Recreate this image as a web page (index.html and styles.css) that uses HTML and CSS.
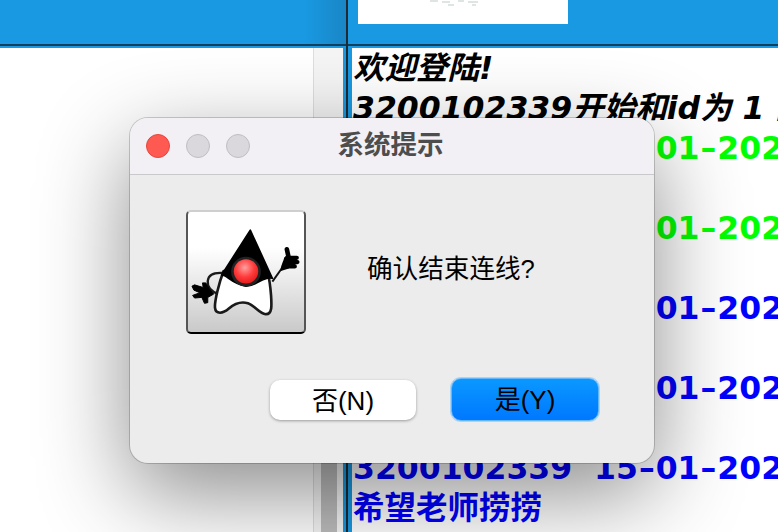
FILE: index.html
```html
<!DOCTYPE html>
<html lang="zh">
<head>
    <meta charset="UTF-8">
    <meta name="viewport" content="width=device-width, initial-scale=1.0">
    <title>系统提示</title>
    <link rel="stylesheet" href="styles.css">
</head>
<body>
    <div class="app">
        <div class="pane pane-left">
            <div class="pane-head"></div>
            <div class="pane-body">
                <div class="user-list"></div>
                <div class="scrollbar">
                    <div class="scroll-thumb"></div>
                </div>
            </div>
        </div>
        <div class="divider"></div>
        <div class="pane pane-right">
            <div class="pane-head">
                <div class="logo">
                    <svg class="logo-bits" viewBox="0 0 56 7">
                        <path d="M2 1 H10 M14 2 H22 M20 5 H26 M30 1 H36 M40 2 H50 M44 5 H48" stroke="#d5dbdd" stroke-width="1.5" fill="none"/>
                    </svg>
                </div>
            </div>
            <div class="pane-body">
                <div class="chat">
                    <p class="line line-system">欢迎登陆!</p>
                    <p class="line line-system">3200102339开始和id为 1 的</p>
                    <p class="line msg-green">3200102339  15<span class="dash">–</span>01<span class="dash">–</span>2022</p>
                    <p class="line"></p>
                    <p class="line msg-green">3200102339  15<span class="dash">–</span>01<span class="dash">–</span>2022</p>
                    <p class="line"></p>
                    <p class="line msg-blue">3200102339  15<span class="dash">–</span>01<span class="dash">–</span>2022</p>
                    <p class="line"></p>
                    <p class="line msg-blue">3200102339  15<span class="dash">–</span>01<span class="dash">–</span>2022</p>
                    <p class="line"></p>
                    <p class="line msg-blue">3200102339  15<span class="dash">–</span>01<span class="dash">–</span>2022</p>
                    <p class="line msg-blue">希望老师捞捞</p>
                </div>
            </div>
        </div>
    </div>

    <div class="dialog">
        <div class="title-bar">
            <div class="lights">
                <span class="light light-close"></span>
                <span class="light"></span>
                <span class="light"></span>
            </div>
            <div class="title">系统提示</div>
        </div>
        <div class="dialog-body">
            <div class="message-row">
                <div class="duke-box">
                    <svg class="duke" viewBox="52 47 352 364">
                        <defs>
                            <radialGradient id="nose" cx="0.45" cy="0.35" r="0.7">
                                <stop offset="0" stop-color="#ffa0a0"/>
                                <stop offset="0.55" stop-color="#ff3b3b"/>
                                <stop offset="1" stop-color="#e01818"/>
                            </radialGradient>
                        </defs>
                        <!-- brazo izquierdo -->
                        <path d="M158 232 C130 230 114 238 112 256 C110 276 126 290 146 297" fill="none" stroke="#1a1a1a" stroke-width="7"/>
                        <path d="M64 272 L72 268 L98 276 L96 262 L106 262 L116 280 L130 296 L112 306 L112 322 L102 324 L94 306 L72 308 L66 300 L88 292 L70 284 Z" fill="#000" stroke="#000" stroke-width="3" stroke-linejoin="round"/>
                        <!-- cuerpo -->
                        <path d="M160 226 C146 262 132 318 134 338 C136 358 158 356 176 340 C192 326 214 318 234 324 C256 332 268 354 288 357 C308 358 306 330 304 300 C302 274 300 254 294 232 Z" fill="#fff" stroke="#1a1a1a" stroke-width="8" stroke-linejoin="round"/>
                        <!-- sombrero -->
                        <path d="M241 102 L154 238 C172 238 180 262 228 272 C262 272 280 240 308 248 Z" fill="#000" stroke="#000" stroke-width="5" stroke-linejoin="round"/>
                        <circle cx="228" cy="228" r="45" fill="#222"/>
                        <circle cx="228" cy="227" r="37" fill="url(#nose)"/>
                        <!-- brazo derecho -->
                        <path d="M308 258 L338 216" stroke="#111" stroke-width="6" fill="none"/>
                        <path d="M352 160 L358 188" stroke="#000" stroke-width="14" stroke-linecap="round" fill="none"/>
                        <path d="M352 186 H382 M352 199 H384 M350 212 H376" stroke="#000" stroke-width="13" stroke-linecap="round" fill="none"/>
                        <path d="M344 184 L360 184 L358 218 L334 226 C330 214 342 198 344 184 Z" fill="#000"/>
                    </svg>
                </div>
                <div class="message">确认结束连线?</div>
            </div>
            <div class="buttons">
                <button class="btn">否(N)</button>
                <button class="btn btn-primary">是(Y)</button>
            </div>
        </div>
    </div>
</body>
</html>
```
FILE: styles.css
```css
* {
    margin: 0;
    padding: 0;
    box-sizing: border-box;
}

html, body {
    height: 100%;
    overflow: hidden;
}

body {
    background: #1899e2;
    font-family: "Liberation Sans", "Noto Sans CJK SC", sans-serif;
}

.app {
    display: flex;
    height: 532px;
    overflow: hidden;
}

.pane {
    display: flex;
    flex-direction: column;
}

.pane-left {
    width: 346px;
}

.pane-right {
    flex: 1;
    min-width: 0;
}

.pane-head {
    height: 46px;
    border-bottom: 2px solid #123f5c;
}

.pane-left .pane-head {
    background: linear-gradient(90deg, #1899e2 88%, #1a86c6);
}

.pane-body {
    flex: 1;
    min-height: 0;
    display: flex;
    margin-top: 2px;
}

.pane-left .pane-body {
    padding-right: 3px;
}

.pane-right .pane-body {
    padding-left: 4px;
}

.user-list {
    flex: 1;
    background: #fff;
}

.scrollbar {
    width: 30px;
    padding: 0 6px 0 7px;
    display: flex;
    flex-direction: column;
    justify-content: flex-end;
    background: #f5f5f5;
    border-left: 1px solid #dedede;
}

.scroll-thumb {
    height: 200px;
    background: #bdbdbd;
}

.divider {
    width: 2px;
    background: #1f2a33;
}

.logo {
    width: 210px;
    height: 24px;
    margin-left: 10px;
    padding-left: 70px;
    background: #fff;
}

.logo-bits {
    display: block;
    width: 56px;
    height: 7px;
}

.chat {
    flex: 1;
    min-width: 0;
    overflow: hidden;
    background: #fff;
    padding-left: 1px;
    font-family: "DejaVu Sans", "Noto Sans CJK SC", sans-serif;
    font-size: 31.5px;
    font-weight: bold;
    color: #000;
}

.line {
    height: 40px;
    line-height: 40px;
    white-space: pre;
}

.line-system {
    font-style: italic;
}

.dash {
    margin: 0 1px;
}

.msg-green {
    color: #00ff00;
}

.msg-blue {
    color: #0000ff;
}

.dialog {
    position: absolute;
    left: 130px;
    top: 118px;
    width: 524px;
    height: 345px;
    display: flex;
    flex-direction: column;
    background: #ececec;
    border-radius: 18px;
    box-shadow: 0 0 0 1px rgba(0, 0, 0, 0.18), 0 30px 90px rgba(0, 0, 0, 0.46);
}

.title-bar {
    height: 57px;
    flex-shrink: 0;
    display: flex;
    align-items: center;
    background: #f2f0f5;
    border-bottom: 1px solid #c9c8ca;
    border-radius: 18px 18px 0 0;
}

.lights {
    display: flex;
    gap: 16px;
    margin-left: 16px;
}

.light {
    width: 24px;
    height: 24px;
    border-radius: 50%;
    background: #dad8dc;
    border: 1px solid #c0bec2;
}

.light-close {
    background: #ff5a52;
    border-color: #e5453e;
}

.title {
    flex: 1;
    padding: 0 123px 7px 0;
    text-align: center;
    font-size: 26.5px;
    font-weight: bold;
    color: #4d4d4d;
    font-family: "Noto Sans CJK SC", sans-serif;
}

.dialog-body {
    flex: 1;
    display: flex;
    flex-direction: column;
    padding: 35px 55px 42px 56px;
}

.message-row {
    display: flex;
    align-items: center;
    gap: 61px;
}

.duke-box {
    width: 120px;
    height: 124px;
    border-radius: 5px;
    border: 2px solid #000;
    border-top-color: #cfcfcf;
    border-left-color: #555;
    border-right-color: #555;
    background: linear-gradient(#fff 30%, #c9c9c9);
}

.duke {
    display: block;
    width: 116px;
    height: 120px;
}

.message {
    padding-bottom: 11px;
    font-size: 25.6px;
    color: #000;
}

.buttons {
    margin-top: auto;
    display: flex;
    align-items: center;
    justify-content: flex-end;
    gap: 35px;
}

.btn {
    width: 146px;
    height: 40px;
    padding-bottom: 4px;
    border: none;
    border-radius: 10px;
    background: #fff;
    color: #000;
    font-size: 26px;
    font-family: "Liberation Sans", "Noto Sans CJK SC", sans-serif;
    box-shadow: 0 1px 3px rgba(0, 0, 0, 0.35);
}

.btn-primary {
    width: 148px;
    height: 43px;
    background: linear-gradient(#0a98ff, #0078ff);
    border: 1px solid #62b6fb;
    box-shadow: 0 0 0 1px rgba(98, 182, 251, 0.45);
}
```
